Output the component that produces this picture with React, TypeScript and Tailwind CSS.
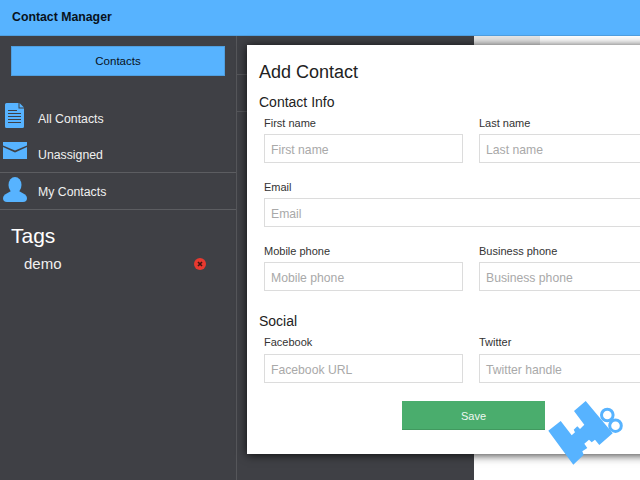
const font = { fontFamily: '"Liberation Sans", Arial, sans-serif' };

function DocIcon() {
  return (
    <svg width="19" height="25" viewBox="0 0 19 25" className="shrink-0">
      <path d="M1.5 0H13.5V5.5H19V23.5Q19 25 17.5 25H1.5Q0 25 0 23.5V1.5Q0 0 1.5 0Z" fill="#57b3ff" />
      <path d="M14.5 0L19 4.5H14.5Z" fill="#57b3ff" />
      <path d="M3 7.5H12M3 10.5H16M3 13.5H16M3 16.5H16M3 19.5H16" stroke="#3f4045" strokeWidth="1" />
    </svg>
  );
}

function MailIcon() {
  return (
    <svg width="24" height="17" viewBox="0 0 24 17" className="shrink-0">
      <path d="M0 0H24V3.5L12 8.5L0 3.5Z" fill="#57b3ff" />
      <path d="M0 5L12 10.5L24 5V17H0Z" fill="#57b3ff" />
    </svg>
  );
}

function UserIcon() {
  return (
    <svg width="24" height="25" viewBox="0 0 24 25" className="shrink-0">
      <ellipse cx="12" cy="8" rx="6.5" ry="8" fill="#57b3ff" />
      <path d="M8 14H16L22 17.5Q24 19 24 21Q24 25 20 25H4Q0 25 0 21Q0 19 2 17.5Z" fill="#57b3ff" />
    </svg>
  );
}

function Field({ label, placeholder, width, mt, gap }: { label: string; placeholder?: string; width: string; mt?: string; gap?: string }) {
  return (
    <div className={`flex flex-col shrink-0 ${width} ${mt ?? ""}`}>
      <label className="text-[11px] leading-[14px] text-[#333] h-[14px]">{label}</label>
      <div className={`${gap ?? "mt-[4px]"} h-[29px] border border-[#dcdcdc] flex items-center px-[6px] pt-[3px] text-[12.2px] text-[#a9a9a9] bg-white`}>
        {placeholder ?? label}
      </div>
    </div>
  );
}

function NavRow({ icon, label, height, border }: { icon: React.ReactNode; label: string; height: string; border?: boolean }) {
  return (
    <div className={`${height} flex items-center ${border ? "border-b border-[#5c5d61]" : ""}`}>
      <div className="w-[38px] flex justify-center pr-[9px]">{icon}</div>
      <span className="pt-[2px] text-[12.3px] text-[#f0f0f0]">{label}</span>
    </div>
  );
}

export default function App() {
  return (
    <div className="relative w-[640px] h-[480px] overflow-hidden flex flex-col bg-white" style={font}>
      <header className="h-[36px] shrink-0 bg-[#57b3ff] border-b border-[#4f9fe0] flex items-center pl-[12px]">
        <span className="text-[12.3px] font-bold text-[#08121c]">Contact Manager</span>
      </header>
      <div className="flex flex-1 min-h-0">
        <aside className="w-[237px] shrink-0 bg-[#3f4045] border-r border-[#55565a]">
          <div className="pt-[10px] pl-[11px]">
            <button className="w-[214px] h-[30px] pt-[2px] bg-[#57b3ff] text-[11.5px] text-[#08121c] border border-[#4f9fe0]">
              Contacts
            </button>
          </div>
          <div className="mt-[24px]">
            <NavRow icon={<div className="mb-[6px]"><DocIcon /></div>} label="All Contacts" height="h-[36px]" />
            <NavRow icon={<div className="mb-[7px]"><MailIcon /></div>} label="Unassigned" height="h-[37px]" border />
            <NavRow icon={<div className="mb-[3px]"><UserIcon /></div>} label="My Contacts" height="h-[37px]" border />
          </div>
          <h2 className="mt-[13px] ml-[11px] text-[21px] leading-[26px] text-white">Tags</h2>
          <div className="mt-[4px] ml-[24px] w-[182px] flex items-center justify-between">
            <span className="text-[15px] text-[#f0f0f0]">demo</span>
            <span className="w-[12px] h-[12px] rounded-full bg-[#e8392f] flex items-center justify-center">
              <svg width="6" height="6" viewBox="0 0 6 6">
                <path d="M1 1L5 5M5 1L1 5" stroke="#3f1512" strokeWidth="1.6" />
              </svg>
            </span>
          </div>
        </aside>
        <div className="w-[237px] shrink-0 bg-[#3f4045]">
          <div className="h-[39px] border-b border-[#55565a]" />
          <div className="h-[37px] border-b border-[#55565a]" />
        </div>
        <div className="flex-1 bg-white">
          <div className="w-[66px] h-[9px] bg-[#e6e6e6]" />
        </div>
      </div>

      <section className="absolute left-[247px] top-[45px] w-[460px] h-[409px] bg-white pl-[12px] pt-[17px] shadow-[0_1px_9px_rgba(0,0,0,0.8)] text-[#222]">
        <h1 className="text-[18px] leading-[20px]">Add Contact</h1>
        <h3 className="mt-[10px] text-[14px] leading-[20px]">Contact Info</h3>
        <div className="pl-[5px]">
          <div className="mt-[4px] flex gap-[16px]">
            <Field label="First name" width="w-[199px]" />
            <Field label="Last name" width="w-[199px]" />
          </div>
          <Field label="Email" width="w-[414px]" mt="mt-[17px]" />
          <div className="mt-[17px] flex gap-[16px]">
            <Field label="Mobile phone" width="w-[199px]" />
            <Field label="Business phone" width="w-[199px]" />
          </div>
        </div>
        <h3 className="mt-[20px] text-[14px] leading-[20px]">Social</h3>
        <div className="pl-[5px] mt-[4px] flex gap-[16px]">
          <Field label="Facebook" placeholder="Facebook URL" width="w-[199px]" gap="mt-[5px]" />
          <Field label="Twitter" placeholder="Twitter handle" width="w-[199px]" gap="mt-[5px]" />
        </div>
        <button className="mt-[18px] ml-[143px] block w-[143px] h-[29px] pt-[2px] bg-[#4aad6d] border-b border-[#41995f] text-[11px] text-[#eef8f1]">
          Save
        </button>
      </section>

      <svg className="absolute left-[545px] top-[398px]" width="80" height="70" viewBox="545 398 80 70">
        <path d="M548.3 430.7L560.7 421L571.7 435.3L575 432.3L573.7 429.7L577.3 426.3L580 429L584.3 424.7L574 411L585.7 401L612.7 433.3L599.3 445L595 439.7L591.7 442.3L589 439.7L584.3 443.7L587.3 448L582.3 451.3L583.7 454.7L573.3 464.7Z" fill="#57b3ff" />
        <circle cx="607.3" cy="415" r="5.8" fill="none" stroke="#57b3ff" strokeWidth="3" />
        <circle cx="615.5" cy="425.7" r="5.8" fill="none" stroke="#57b3ff" strokeWidth="3" />
      </svg>
    </div>
  );
}
